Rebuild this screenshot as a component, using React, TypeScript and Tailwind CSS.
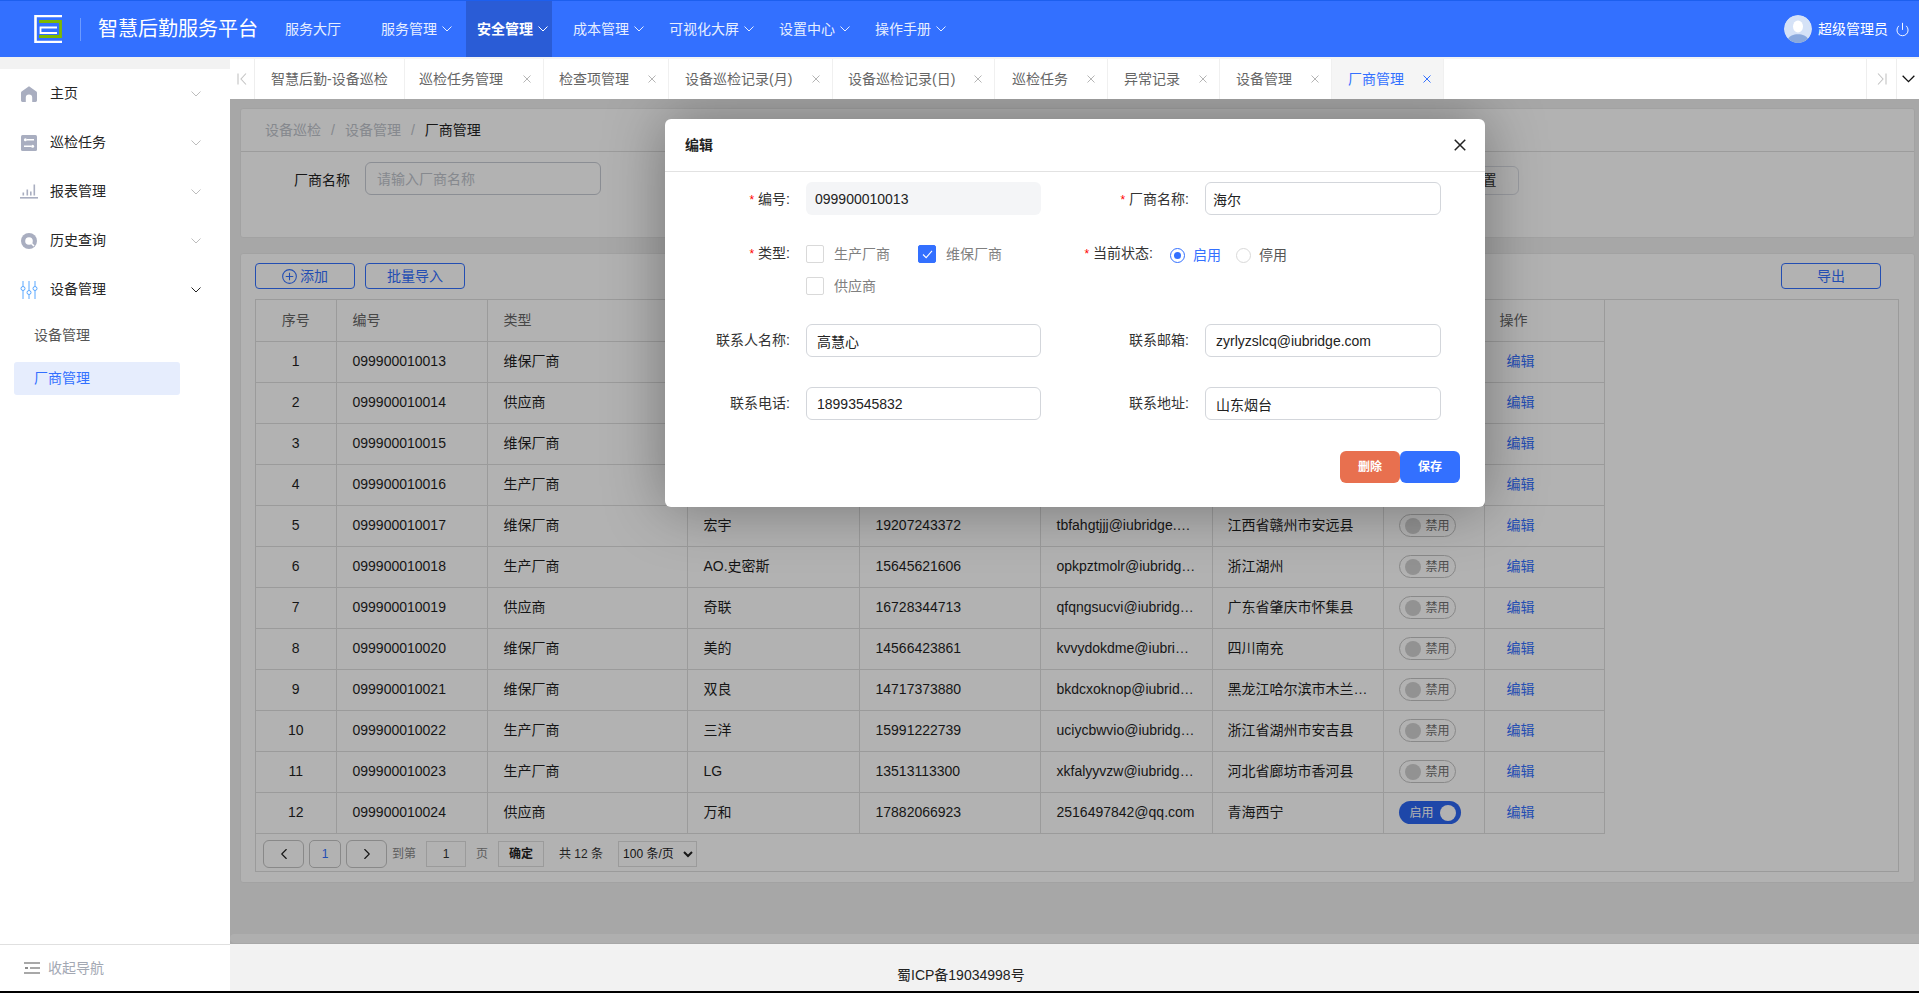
import React from "react";
import { Power, ChevronLeft, ChevronRight } from "lucide-react";

const FONT = 'font-["Liberation_Sans","Noto_Sans_CJK_SC",sans-serif]';

function Chev({ cls }: { cls: string }) {
  return (
    <svg viewBox="0 0 10 6" className={cls} fill="none" stroke="currentColor" strokeWidth="1">
      <path d="M0.5 0.5 L5 5 L9.5 0.5" />
    </svg>
  );
}

function Cross({ cls }: { cls: string }) {
  return (
    <svg viewBox="0 0 8 8" className={cls} fill="none" stroke="currentColor" strokeWidth="1">
      <path d="M0.5 0.5 L7.5 7.5 M7.5 0.5 L0.5 7.5" />
    </svg>
  );
}

const menus = [
  { t: "服务大厅", chev: false, cls: "mr-[8px]" },
  { t: "服务管理", chev: true, cls: "" },
  { t: "安全管理", chev: true, cls: "bg-[#2a5cd6] text-white font-bold" },
  { t: "成本管理", chev: true, cls: "" },
  { t: "可视化大屏", chev: true, cls: "" },
  { t: "设置中心", chev: true, cls: "" },
  { t: "操作手册", chev: true, cls: "" },
];

function Header() {
  return (
    <header className="h-[57px] shrink-0 bg-[#3370ff] border-t border-[#1d5fee] flex items-center text-white">
      <svg viewBox="0 0 28 28" className="w-[28px] h-[28px] ml-[34px] shrink-0">
        <path d="M28 1 H1.5 V27 H28" fill="none" stroke="#fff" strokeWidth="2.6" />
        <path d="M5 6.5 H26.5 V21.5 H5" fill="none" stroke="#7fb800" strokeWidth="2.8" />
        <path d="M23 12.5 H6.5 V18 H23" fill="none" stroke="#fff" strokeWidth="1.8" />
      </svg>
      <div className="w-px h-[23px] bg-[#6d9bff] ml-[18px]" />
      <div className="text-[20px] ml-[17px] w-[158px] whitespace-nowrap">智慧后勤服务平台</div>
      <nav className="flex h-full gap-[10px] ml-[18px]">
        {menus.map((m) => (
          <div key={m.t} className={`flex items-center pl-[11px] pr-[4px] text-[14px] text-[#e6eeff] ${m.cls}`}>
            <span className="whitespace-nowrap">{m.t}</span>
            {m.chev ? <Chev cls="w-[10px] h-[6px] ml-[5px]" /> : <span className="w-[7px]" />}
          </div>
        ))}
      </nav>
      <div className="ml-auto flex items-center mr-[9px]">
        <svg viewBox="0 0 28 28" className="w-[28px] h-[28px] rounded-full">
          <circle cx="14" cy="14" r="14" fill="#d5e2f7" />
          <ellipse cx="14" cy="11.5" rx="5" ry="6" fill="#fff" />
          <path d="M4 24 C6 17.5 22 17.5 24 24 A14 14 0 0 1 4 24 Z" fill="#8aa9dd" />
        </svg>
        <span className="text-[14px] ml-[6px] w-[70px] whitespace-nowrap">超级管理员</span>
        <Power className="w-[15px] h-[15px] ml-[7px]" strokeWidth={1.5} />
      </div>
    </header>
  );
}

const IconHome = (
  <svg viewBox="0 0 16 16" className="w-[16px] h-[16px]" fill="#a9aec0">
    <path d="M8 0.3 L15.4 5.6 Q16 6 16 7 V14.6 Q16 16 14.6 16 H11.2 V11.6 A3.2 3.2 0 0 0 4.8 11.6 V16 H1.4 Q0 16 0 14.6 V7 Q0 6 0.6 5.6 Z" />
  </svg>
);
const IconCard = (
  <svg viewBox="0 0 16 16" className="w-[16px] h-[16px]">
    <rect width="16" height="16" rx="1.5" fill="#a9aec0" />
    <path d="M6 4.8 H13 M3 11.2 H10" stroke="#fff" strokeWidth="1.4" />
    <circle cx="4.4" cy="4.8" r="1.5" fill="#fff" />
    <circle cx="11.6" cy="11.2" r="1.5" fill="#fff" />
  </svg>
);
const IconChart = (
  <svg viewBox="0 0 18 15" className="w-[18px] h-[15px]" fill="#a9aec0">
    <rect x="0" y="13" width="18" height="1.6" />
    <rect x="2.5" y="8.5" width="1.6" height="3" />
    <rect x="6.5" y="5.5" width="1.6" height="6" />
    <rect x="10" y="7.5" width="1.6" height="4" />
    <rect x="13.5" y="0.5" width="1.6" height="11" />
  </svg>
);
const IconSearch = (
  <svg viewBox="0 0 16 16" className="w-[16px] h-[16px]">
    <circle cx="8" cy="8" r="8" fill="#a9aec0" />
    <circle cx="8" cy="8" r="3.8" fill="#fff" />
    <path d="M10.5 10.5 L13 13" stroke="#fff" strokeWidth="1.6" />
  </svg>
);
const IconSliders = (
  <svg viewBox="0 0 18 18" className="w-[18px] h-[18px]" fill="none" stroke="#5aa8ff" strokeWidth="1">
    <path d="M3 0 V5.5 M3 9.5 V18 M9 0 V9.5 M9 13.5 V18 M15 0 V5.5 M15 9.5 V18" />
    <circle cx="3" cy="7.5" r="2" />
    <circle cx="9" cy="11.5" r="2" />
    <circle cx="15" cy="7.5" r="2" />
  </svg>
);

const navs: { t: string; icon: React.ReactNode; open?: boolean }[] = [
  { t: "主页", icon: IconHome },
  { t: "巡检任务", icon: IconCard },
  { t: "报表管理", icon: IconChart },
  { t: "历史查询", icon: IconSearch },
  { t: "设备管理", icon: IconSliders, open: true },
];

function Sidebar() {
  return (
    <aside className="w-[230px] shrink-0 flex flex-col bg-white">
      <div className="h-[12px] bg-[#f2f2f2]" />
      <div className="flex-1">
        {navs.map((n) => (
          <div key={n.t} className="h-[49px] flex items-center text-[14px] text-[#262626]">
            <span className="w-[18px] ml-[20px] flex justify-center">{n.icon}</span>
            <span className="ml-[12px]">{n.t}</span>
            <Chev cls={`w-[10px] h-[6px] ml-auto mr-[29px] ${n.open ? "text-[#222]" : "text-[#bdbdbd]"}`} />
          </div>
        ))}
        <div className="h-[33px] mt-[5px] ml-[14px] pl-[20px] flex items-center text-[14px] text-[#555]">设备管理</div>
        <div className="h-[33px] mt-[10px] ml-[14px] w-[166px] pl-[20px] flex items-center text-[14px] text-[#3370ff] bg-[#e6edfd] rounded-[3px]">厂商管理</div>
      </div>
      <div className="h-[47px] border-t border-[#e0e0e0] flex items-center">
        <svg viewBox="0 0 16 12" className="w-[16px] h-[12px] ml-[24px]" fill="none" stroke="#8c8c8c" strokeWidth="1.3">
          <path d="M0 1 H16 M6 6 H16 M0 11 H16" />
          <path d="M4 6 L1 6" strokeWidth="2" />
        </svg>
        <span className="ml-[8px] text-[14px] text-[#a3a8b3]">收起导航</span>
      </div>
    </aside>
  );
}

const tabs = [
  { t: "智慧后勤-设备巡检", w: "w-[150px] pl-[16px]", x: false, active: false },
  { t: "巡检任务管理", w: "w-[139px] pl-[14px]", x: true, active: false },
  { t: "检查项管理", w: "w-[125px] pl-[15px]", x: true, active: false },
  { t: "设备巡检记录(月)", w: "w-[164px] pl-[16px]", x: true, active: false },
  { t: "设备巡检记录(日)", w: "w-[162px] pl-[15px]", x: true, active: false },
  { t: "巡检任务", w: "w-[113px] pl-[17px]", x: true, active: false },
  { t: "异常记录", w: "w-[112px] pl-[16px]", x: true, active: false },
  { t: "设备管理", w: "w-[112px] pl-[16px]", x: true, active: false },
  { t: "厂商管理", w: "w-[112px] pl-[16px]", x: true, active: true },
];

function Tabs() {
  return (
    <div className="h-[42px] shrink-0 pt-[2px] bg-[#f4f4f4]">
      <div className="h-[40px] bg-white flex items-center text-[14px] text-[#666]">
        <div className="w-[25px] h-full flex items-center justify-center text-[#c4c4c4] border-r border-[#eeeeee]">
          <svg viewBox="0 0 10 12" className="w-[10px] h-[12px]" fill="none" stroke="currentColor" strokeWidth="1.1">
            <path d="M1 0.5 V11.5 M9 0.5 L4 6 L9 11.5" />
          </svg>
        </div>
        {tabs.map((t) => (
          <div
            key={t.t}
            className={`${t.w} h-full shrink-0 flex items-center border-r border-[#f0f0f0] ${t.active ? "bg-[#f5f5f5] text-[#3370ff]" : ""}`}
          >
            <span className="whitespace-nowrap">{t.t}</span>
            {t.x && <Cross cls={`w-[8px] h-[8px] ml-auto mr-[12px] ${t.active ? "text-[#3370ff]" : "text-[#b5b5b5]"}`} />}
          </div>
        ))}
        <div className="ml-auto w-[30px] h-full flex items-center justify-center text-[#c4c4c4] border-l border-[#eeeeee]">
          <svg viewBox="0 0 10 12" className="w-[10px] h-[12px]" fill="none" stroke="currentColor" strokeWidth="1.1">
            <path d="M9 0.5 V11.5 M1 0.5 L6 6 L1 11.5" />
          </svg>
        </div>
        <div className="w-[23px] h-full flex items-center justify-center border-l border-[#eeeeee]">
          <Chev cls="w-[13px] h-[8px] text-[#111]" />
        </div>
      </div>
    </div>
  );
}

const rows = [
  ["1", "099900010013", "维保厂商", "海尔", "18993545832", "zyrlyzslcq@iubridge.com", "山东烟台", "off"],
  ["2", "099900010014", "供应商", "格力", "13812345678", "gdhsdkwuqe@iubridge.com", "广东珠海", "off"],
  ["3", "099900010015", "维保厂商", "美菱", "15523456789", "mlkwjeqpzx@iubridge.com", "安徽合肥", "off"],
  ["4", "099900010016", "生产厂商", "方太", "17734567890", "ftzmxnbqwe@iubridge.com", "浙江宁波", "off"],
  ["5", "099900010017", "维保厂商", "宏宇", "19207243372", "tbfahgtjjj@iubridge.com", "江西省赣州市安远县", "off"],
  ["6", "099900010018", "生产厂商", "AO.史密斯", "15645621606", "opkpztmolr@iubridge.com", "浙江湖州", "off"],
  ["7", "099900010019", "供应商", "奇联", "16728344713", "qfqngsucvi@iubridge.com", "广东省肇庆市怀集县", "off"],
  ["8", "099900010020", "维保厂商", "美的", "14566423861", "kvvydokdme@iubridge.com", "四川南充", "off"],
  ["9", "099900010021", "维保厂商", "双良", "14717373880", "bkdcxoknop@iubridge.com", "黑龙江哈尔滨市木兰…", "off"],
  ["10", "099900010022", "生产厂商", "三洋", "15991222739", "uciycbwvio@iubridge.com", "浙江省湖州市安吉县", "off"],
  ["11", "099900010023", "生产厂商", "LG", "13513113300", "xkfalyyvzw@iubridge.com", "河北省廊坊市香河县", "off"],
  ["12", "099900010024", "供应商", "万和", "17882066923", "2516497842@qq.com", "青海西宁", "on"],
];

const th = "h-[41px] pl-[16px] pr-[16px] text-left font-normal text-[14px] text-[#666] border-r border-b border-[#dfdfdf]";
const td = "h-[41px] pl-[16px] pr-[16px] text-[14px] text-[#1f1f1f] border-r border-b border-[#dfdfdf] truncate";

function Switch({ on }: { on: boolean }) {
  if (on) {
    return (
      <span className="w-[62px] h-[23px] rounded-full bg-[#2b66f2] flex items-center text-[12px] text-white pl-[11px]">
        启用
        <span className="w-[16px] h-[16px] rounded-full bg-white ml-[6px]" />
      </span>
    );
  }
  return (
    <span className="w-[57px] h-[23px] rounded-full border border-[#c4c4c4] flex items-center text-[12px] text-[#707070] pl-[5px]">
      <span className="w-[16px] h-[16px] rounded-full bg-[#d2d2d2] mr-[5px]" />
      禁用
    </span>
  );
}

function Table() {
  return (
    <div className="mt-[10px] ml-[14px] w-[1644px] h-[573px] border border-[#dfdfdf]">
      <table className="table-fixed border-collapse w-[1348px]">
        <colgroup>
          <col className="w-[80px]" />
          <col className="w-[151px]" />
          <col className="w-[200px]" />
          <col className="w-[172px]" />
          <col className="w-[181px]" />
          <col className="w-[172px]" />
          <col className="w-[171px]" />
          <col className="w-[101px]" />
          <col className="w-[120px]" />
        </colgroup>
        <thead>
          <tr>
            <th className={`${th} !text-center`}>序号</th>
            <th className={th}>编号</th>
            <th className={th}>类型</th>
            <th className={th}>厂商名称</th>
            <th className={th}>联系电话</th>
            <th className={th}>联系邮箱</th>
            <th className={th}>联系地址</th>
            <th className={th}>状态</th>
            <th className={`${th} !pl-[15px]`}>操作</th>
          </tr>
        </thead>
        <tbody>
          {rows.map((r) => (
            <tr key={r[0]}>
              <td className={`${td} text-center`}>{r[0]}</td>
              <td className={td}>{r[1]}</td>
              <td className={td}>{r[2]}</td>
              <td className={td}>{r[3]}</td>
              <td className={td}>{r[4]}</td>
              <td className={td}>{r[5]}</td>
              <td className={`${td} !pl-[15px] !pr-[14px]`}>{r[6]}</td>
              <td className={`${td} !pl-[15px]`}><Switch on={r[7] === "on"} /></td>
              <td className={`${td} !pl-[22px] text-[#3370ff]`}>编辑</td>
            </tr>
          ))}
        </tbody>
      </table>
      <div className="flex items-center h-[40px] pl-[7px] text-[12px] text-[#888]">
        <button className="w-[41px] h-[28px] border border-[#c4c4c4] rounded-[6px] flex items-center justify-center text-[#1f1f1f]">
          <ChevronLeft className="w-[18px] h-[18px]" strokeWidth={1.5} />
        </button>
        <button className="w-[32px] h-[28px] ml-[5px] border border-[#c4c4c4] rounded-[5px] text-[#3370ff]">1</button>
        <button className="w-[41px] h-[28px] ml-[5px] border border-[#c4c4c4] rounded-[6px] flex items-center justify-center text-[#1f1f1f]">
          <ChevronRight className="w-[18px] h-[18px]" strokeWidth={1.5} />
        </button>
        <span className="ml-[5px]">到第</span>
        <span className="w-[40px] h-[26px] ml-[10px] border border-[#dfdfdf] flex items-center justify-center text-[#333]">1</span>
        <span className="ml-[10px]">页</span>
        <button className="w-[46px] h-[26px] ml-[10px] border border-[#dfdfdf] text-[#222] font-bold">确定</button>
        <span className="ml-[15px] text-[#333]">共 12 条</span>
        <select className="w-[79px] h-[26px] ml-[15px] border border-[#dfdfdf] text-[12px] text-[#222]" defaultValue="100">
          <option value="100">100 条/页</option>
        </select>
      </div>
    </div>
  );
}

function OutBtn({ children, cls }: { children: React.ReactNode; cls: string }) {
  return (
    <button className={`w-[100px] h-[26px] border border-[#3370ff] rounded-[4px] text-[14px] text-[#3370ff] flex items-center justify-center ${cls}`}>
      {children}
    </button>
  );
}

function Content() {
  return (
    <div className="h-[845px] flex flex-col relative bg-[#f0f0f0]">
      <div className="flex-1 pt-[9px] pl-[10px] pr-[4px]">
        <section className="h-[130px] bg-white border border-[#e9e9e9] rounded-[3px]">
          <div className="h-[43px] border-b border-[#e0e0e0] flex items-center pl-[24px] text-[14px] text-[#c0c4cc]">
            <span>设备巡检</span>
            <span className="mx-[10px]">/</span>
            <span>设备管理</span>
            <span className="mx-[10px]">/</span>
            <span className="text-[#222]">厂商管理</span>
          </div>
          <div className="flex items-start pt-[10px] text-[14px]">
            <span className="ml-[53px] mt-[8px] text-[#222]">厂商名称</span>
            <input
              className="ml-[15px] w-[236px] h-[33px] border border-[#c8ccd4] rounded-[6px] px-[11px] placeholder:text-[#c0c4cc]"
              placeholder="请输入厂商名称"
            />
            <button className="ml-[845px] mt-[4px] w-[73px] h-[29px] border border-[#dcdfe6] rounded-[6px] text-[#333]">重置</button>
          </div>
        </section>
        <section className="h-[630px] mt-[15px] bg-white border border-[#e9e9e9] rounded-[3px]">
          <div className="flex pt-[9px] pl-[14px] pr-[33px]">
            <OutBtn cls="">
              <svg viewBox="0 0 14 14" className="w-[15px] h-[15px] mr-[3px]" fill="none" stroke="currentColor" strokeWidth="1">
                <circle cx="7" cy="7" r="6.4" />
                <path d="M3.5 7 H10.5 M7 3.5 V10.5" />
              </svg>
              添加
            </OutBtn>
            <OutBtn cls="ml-[10px]">批量导入</OutBtn>
            <OutBtn cls="ml-auto">导出</OutBtn>
          </div>
          <Table />
        </section>
      </div>
      <div className="h-[9px] mb-[1px] shrink-0 bg-[#fbfbfb] rounded-l-[5px]" />
      <div className="absolute inset-0 bg-black/30 overflow-hidden">
        <Modal />
      </div>
    </div>
  );
}

function Star() {
  return <span className="text-[#f00] text-[12px] mr-[4px]">*</span>;
}

function Inp({ value, cls }: { value: string; cls: string }) {
  return (
    <input
      readOnly
      value={value}
      className={`h-[33px] rounded-[6px] text-[14px] text-[#222] ${cls}`}
    />
  );
}

const inputBorder = "border border-[#d3d6db]";

function Check({ on, label }: { on: boolean; label: string }) {
  return (
    <span className="w-[112px] flex items-center h-[18px]">
      <span className={`w-[18px] h-[18px] rounded-[2px] border flex items-center justify-center ${on ? "bg-[#3370ff] border-[#3370ff]" : "border-[#d9d9d9]"}`}>
        {on && (
          <svg viewBox="0 0 12 10" className="w-[11px] h-[9px]" fill="none" stroke="#fff" strokeWidth="1.2">
            <path d="M1 5 L4.5 8.5 L11 1" />
          </svg>
        )}
      </span>
      <span className="ml-[10px] text-[14px] text-[#808080] whitespace-nowrap">{label}</span>
    </span>
  );
}

function Modal() {
  return (
    <div className="absolute left-[435px] top-[20px] w-[820px] h-[388px] bg-white rounded-[6px] shadow-[0_0_60px_rgba(0,0,0,0.35)] text-[14px] text-[#333]">
      <div className="h-[53px] border-b border-[#e2e2e2] flex items-center pl-[20px] pr-[19px]">
        <span className="font-bold text-[#222]">编辑</span>
        <Cross cls="w-[12px] h-[12px] ml-auto text-[#222]" />
      </div>
      <div className="flex h-[33px] mt-[10px] items-center">
        <label className="w-[125px] text-right pt-[2px]"><Star />编号:</label>
        <Inp value="099900010013" cls="ml-[16px] w-[235px] bg-[#f4f5f7] px-[9px]" />
        <label className="w-[148px] text-right pt-[2px]"><Star />厂商名称:</label>
        <Inp value="海尔" cls={`ml-[16px] w-[236px] ${inputBorder} px-[7px]`} />
      </div>
      <div className="flex h-[50px] mt-[30px] items-start">
        <label className="w-[125px] text-right leading-[16px]"><Star />类型:</label>
        <div className="ml-[16px] w-[234px] flex flex-wrap gap-y-[14px]">
          <Check on={false} label="生产厂商" />
          <Check on label="维保厂商" />
          <Check on={false} label="供应商" />
        </div>
        <label className="w-[113px] text-right leading-[16px] whitespace-nowrap"><Star />当前状态:</label>
        <div className="flex items-center ml-[17px] mt-[2px] h-[16px]">
          <span className="w-[15px] h-[15px] rounded-full border border-[#3370ff] flex items-center justify-center">
            <span className="w-[7px] h-[7px] rounded-full bg-[#3370ff]" />
          </span>
          <span className="ml-[8px] text-[#3370ff]">启用</span>
          <span className="w-[15px] h-[15px] rounded-full border border-[#d9d9d9] ml-[15px]" />
          <span className="ml-[8px] text-[#555]">停用</span>
        </div>
      </div>
      <div className="flex h-[33px] mt-[29px] items-center">
        <label className="w-[125px] text-right">联系人名称:</label>
        <Inp value="高慧心" cls={`ml-[16px] w-[235px] ${inputBorder} px-[10px]`} />
        <label className="w-[148px] text-right">联系邮箱:</label>
        <Inp value="zyrlyzslcq@iubridge.com" cls={`ml-[16px] w-[236px] ${inputBorder} px-[10px]`} />
      </div>
      <div className="flex h-[33px] mt-[30px] items-center">
        <label className="w-[125px] text-right">联系电话:</label>
        <Inp value="18993545832" cls={`ml-[16px] w-[235px] ${inputBorder} px-[10px]`} />
        <label className="w-[148px] text-right">联系地址:</label>
        <Inp value="山东烟台" cls={`ml-[16px] w-[236px] ${inputBorder} px-[10px]`} />
      </div>
      <div className="flex justify-end mt-[31px] pr-[25px] text-[12px] font-bold text-white">
        <button className="w-[60px] h-[32px] bg-[#e8704f] rounded-[6px]">删除</button>
        <button className="w-[60px] h-[32px] bg-[#3370ff] rounded-[6px]">保存</button>
      </div>
    </div>
  );
}

export default function App() {
  return (
    <div className={`h-[993px] flex flex-col overflow-hidden border-b-[2px] border-black bg-white ${FONT}`}>
      <Header />
      <div className="flex flex-1 min-h-0">
        <Sidebar />
        <div className="flex-1 min-w-0 flex flex-col">
          <Tabs />
          <Content />
          <footer className="flex-1 bg-[#f2f2f2] flex items-center pl-[667px] pt-[16px] text-[14px] text-[#222]">
            蜀ICP备19034998号
          </footer>
        </div>
      </div>
    </div>
  );
}
